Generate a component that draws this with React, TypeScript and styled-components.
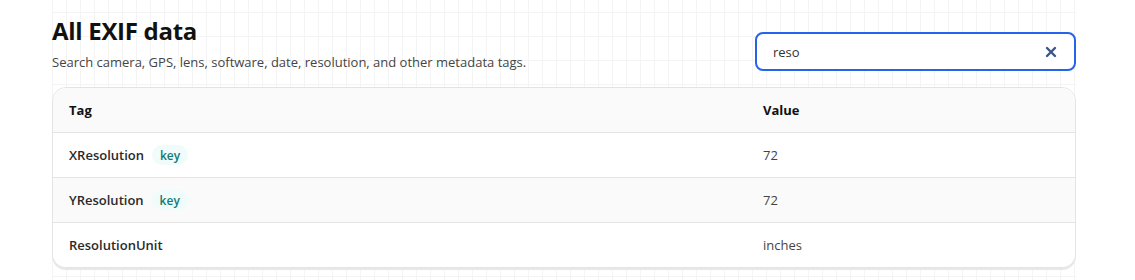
import React, { useState } from "react";
import styled, { createGlobalStyle } from "styled-components";

const GlobalStyle = createGlobalStyle`
  html, body { margin: 0; padding: 0; background: #ffffff; }
  body { font-family: "Open Sans", "Noto Sans", sans-serif; color: #222; }
  * { box-sizing: border-box; }
`;

const Page = styled.div`
  width: 1024px;
  margin-left: 52px;
  min-height: 280px;
  background-color: #ffffff;
  background-image:
    linear-gradient(to right, #f4f4f4 1px, transparent 1px),
    linear-gradient(to bottom, #f4f4f4 1px, transparent 1px);
  background-size: 14px 24px;
  background-position: 0 12px;
`;

const Header = styled.header`
  display: flex;
  justify-content: space-between;
  align-items: flex-end;
  padding-top: 16px;
  margin-bottom: 16px;
`;

const TitleBlock = styled.div`
  display: flex;
  flex-direction: column;
`;

const Title = styled.h1`
  margin: 0;
  font-size: 24px;
  line-height: 30px;
  font-weight: 700;
  color: #111;
  letter-spacing: -0.3px;
`;

const Subtitle = styled.p`
  margin: 7px 0 0;
  font-size: 13px;
  line-height: 18px;
  color: #444;
`;

const SearchBox = styled.label`
  display: flex;
  align-items: center;
  width: 321px;
  height: 39px;
  border: 2px solid #2563eb;
  border-radius: 8px;
  background: #fff;
  padding: 0 14px 0 16px;
`;

const SearchInput = styled.input`
  flex: 1;
  border: none;
  outline: none;
  background: transparent;
  font-family: inherit;
  font-size: 13px;
  color: #333;
  padding: 0;
`;

const ClearButton = styled.button`
  display: flex;
  align-items: center;
  justify-content: center;
  width: 18px;
  height: 18px;
  border: none;
  background: transparent;
  padding: 0;
  color: #3b5683;
  cursor: pointer;
`;

const Card = styled.div`
  border: 1px solid #e4e4e4;
  border-radius: 14px;
  overflow: hidden;
  background: #fff;
  box-shadow: 0 2px 0 #e8e8e8;
`;

const Row = styled.div<{ $striped?: boolean; $head?: boolean }>`
  display: grid;
  grid-template-columns: 694px 1fr;
  height: 44px;
  align-items: center;
  background: ${(p) => (p.$head || p.$striped ? "#fafafa" : "#ffffff")};
  & + & {
    height: 45px;
    border-top: 1px solid #e4e4e4;
  }
`;

const Cell = styled.div<{ $head?: boolean; $strong?: boolean }>`
  display: flex;
  align-items: center;
  gap: 8px;
  padding-left: 16px;
  font-size: 13px;
  font-weight: ${(p) => (p.$head ? 700 : p.$strong ? 600 : 400)};
  color: ${(p) => (p.$head ? "#111" : p.$strong ? "#2a2a2a" : "#444")};
`;

const KeyBadge = styled.span`
  display: inline-flex;
  align-items: center;
  height: 20px;
  padding: 0 8px;
  border-radius: 10px;
  background: #effcfb;
  color: #137a76;
  font-size: 12px;
  font-weight: 600;
`;

const rows = [
  { tag: "XResolution", key: true, value: "72" },
  { tag: "YResolution", key: true, value: "72" },
  { tag: "ResolutionUnit", key: false, value: "inches" },
];

export default function App() {
  const [q, setQ] = useState("reso");
  return (
    <>
      <GlobalStyle />
      <Page>
        <Header>
          <TitleBlock>
            <Title>All EXIF data</Title>
            <Subtitle>
              Search camera, GPS, lens, software, date, resolution, and other metadata tags.
            </Subtitle>
          </TitleBlock>
          <SearchBox>
            <SearchInput value={q} onChange={(e) => setQ(e.target.value)} />
            <ClearButton aria-label="Clear" onClick={() => setQ("")}>
              <svg width="12" height="12" viewBox="0 0 12 12">
                <path
                  d="M2 2 L10 10 M10 2 L2 10"
                  stroke="currentColor"
                  strokeWidth="2.4"
                  strokeLinecap="round"
                />
              </svg>
            </ClearButton>
          </SearchBox>
        </Header>
        <Card>
          <Row $head>
            <Cell $head>Tag</Cell>
            <Cell $head>Value</Cell>
          </Row>
          {rows.map((r, i) => (
            <Row key={r.tag} $striped={i % 2 === 1}>
              <Cell $strong>
                {r.tag}
                {r.key && <KeyBadge>key</KeyBadge>}
              </Cell>
              <Cell>{r.value}</Cell>
            </Row>
          ))}
        </Card>
      </Page>
    </>
  );
}
